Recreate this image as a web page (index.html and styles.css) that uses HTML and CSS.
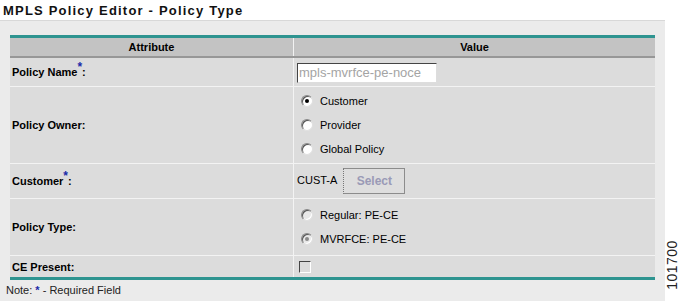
FILE: index.html
```html
<!DOCTYPE html>
<html lang="en">
<head>
    <meta charset="UTF-8">
    <title>MPLS Policy Editor - Policy Type</title>
    <link rel="stylesheet" href="styles.css">
</head>
<body>
    <div class="title-bar">MPLS Policy Editor - Policy Type</div>

    <div class="panel">
        <table class="editor">
            <tr class="head">
                <th class="attr-col">Attribute</th>
                <th>Value</th>
            </tr>
            <tr class="row-name">
                <td class="label">Policy Name<sup class="req">*</sup>:</td>
                <td><input class="text-field" type="text" value="mpls-mvrfce-pe-noce" disabled></td>
            </tr>
            <tr class="row-owner">
                <td class="label">Policy Owner:</td>
                <td>
                    <label class="opt"><span class="radio checked"></span>Customer</label>
                    <label class="opt"><span class="radio"></span>Provider</label>
                    <label class="opt"><span class="radio"></span>Global Policy</label>
                </td>
            </tr>
            <tr class="row-customer">
                <td class="label">Customer<sup class="req">*</sup>:</td>
                <td><span class="cust">CUST-A</span><button class="select-btn">Select</button></td>
            </tr>
            <tr class="row-type">
                <td class="label">Policy Type:</td>
                <td>
                    <label class="opt"><span class="radio off"></span>Regular: PE-CE</label>
                    <label class="opt"><span class="radio off checked"></span>MVRFCE: PE-CE</label>
                </td>
            </tr>
            <tr class="row-ce">
                <td class="label">CE Present:</td>
                <td><span class="check"></span></td>
            </tr>
        </table>
        <div class="note">Note: <span class="req-star">*</span> - Required Field</div>
    </div>

    <div class="side-strip"></div>
    <div class="fig-id">101700</div>
</body>
</html>
```

FILE: styles.css
```css
body {
    margin: 0;
    font-family: "Liberation Sans", Arial, sans-serif;
    font-size: 11px;
    color: #000;
    background: #fff;
    width: 679px;
    height: 301px;
    overflow: hidden;
    position: relative;
}
.title-bar {
    height: 20px;
    padding-left: 3px;
    font-size: 13px;
    font-weight: bold;
    letter-spacing: 1.2px;
    line-height: 22px;
    color: #111;
    border-bottom: 1px solid #d8d8d8;
    width: 662px;
}
.panel {
    width: 665px;
    height: 280px;
    background: #ebebeb;
    padding-top: 14px;
    box-sizing: border-box;
}
.editor {
    margin-left: 10px;
    width: 645px;
    border-collapse: collapse;
    border-top: 3px solid #2e9490;
    border-bottom: 3px solid #2e9490;
    border-image: repeating-linear-gradient(90deg, #26908c 0 1px, #8ed0cc 1px 2px) 3;
}
.editor th {
    background: #c3c3c3;
    font-weight: bold;
    height: 18px;
    padding: 0;
    border-bottom: 2px solid #979797;
    font-size: 11px;
}
.editor th.attr-col {
    width: 283px;
    border-right: 1px solid #f2f2f2;
}
.editor td {
    background: #dcdcdc;
    padding: 0 0 0 3px;
    border-top: 1px solid #f3f3f3;
    vertical-align: middle;
}
.editor td.label {
    font-weight: bold;
    padding-left: 2px;
    border-right: 1px solid #f3f3f3;
}
.row-name td { height: 28px; }
.row-owner td { height: 76px; }
.row-customer td { height: 34px; }
.row-type td { height: 56px; }
.row-ce td { height: 21px; }
.req {
    color: #1a2aa8;
    font-size: 12px;
    vertical-align: 5px;
    line-height: 0;
    font-weight: bold;
}
.text-field {
    width: 140px;
    height: 20px;
    box-sizing: border-box;
    font-family: "Liberation Sans", Arial, sans-serif;
    font-size: 13px;
    color: #a4a4a4;
    background: #fff;
    border-top: 1px solid #444;
    border-left: 1px solid #444;
    border-right: 1px solid #ddd;
    border-bottom: 1px solid #ddd;
    padding: 0 1px;
    margin-top: 1px;
}
.opt {
    display: flex;
    align-items: center;
    height: 24px;
    padding-left: 4px;
}
.radio {
    width: 12px;
    height: 12px;
    border-radius: 50%;
    background: #fff;
    box-shadow: inset 1px 1px 0 #555, inset -1px -1px 0 #fff;
    border: 1px solid;
    border-color: #888 #e0e0e0 #e0e0e0 #888;
    box-sizing: border-box;
    margin-right: 7px;
    position: relative;
}
.radio.checked::after {
    content: "";
    position: absolute;
    left: 3px;
    top: 3px;
    width: 4px;
    height: 4px;
    border-radius: 50%;
    background: #000;
}
.radio.off {
    background: #e8e8e8;
}
.radio.off.checked::after {
    background: #8a8a8a;
}
.cust {
    margin-right: 6px;
}
.select-btn {
    width: 62px;
    height: 26px;
    background: #dedede;
    border: 1px solid #8c8c8c;
    border-left: 1px dotted #777;
    color: #9a9ab6;
    font-family: "Liberation Sans", Arial, sans-serif;
    font-size: 12px;
    font-weight: bold;
    vertical-align: middle;
}
.check {
    display: inline-block;
    width: 12px;
    height: 12px;
    box-sizing: border-box;
    border-top: 1px solid #444;
    border-left: 1px solid #444;
    border-right: 1px solid #fff;
    border-bottom: 1px solid #fff;
    margin-left: 2px;
    vertical-align: middle;
}
.note {
    padding: 4px 0 0 6px;
    color: #222;
    font-size: 11px;
}
.req-star {
    color: #1a2aa8;
    font-weight: bold;
}
.side-strip {
    position: absolute;
    left: 665px;
    top: 21px;
    width: 14px;
    height: 280px;
    background: #fff;
}
.fig-id {
    position: absolute;
    left: 642px;
    top: 257px;
    width: 60px;
    text-align: center;
    font-size: 14px;
    letter-spacing: 0.5px;
    transform: rotate(-90deg);
    color: #222;
}
```
